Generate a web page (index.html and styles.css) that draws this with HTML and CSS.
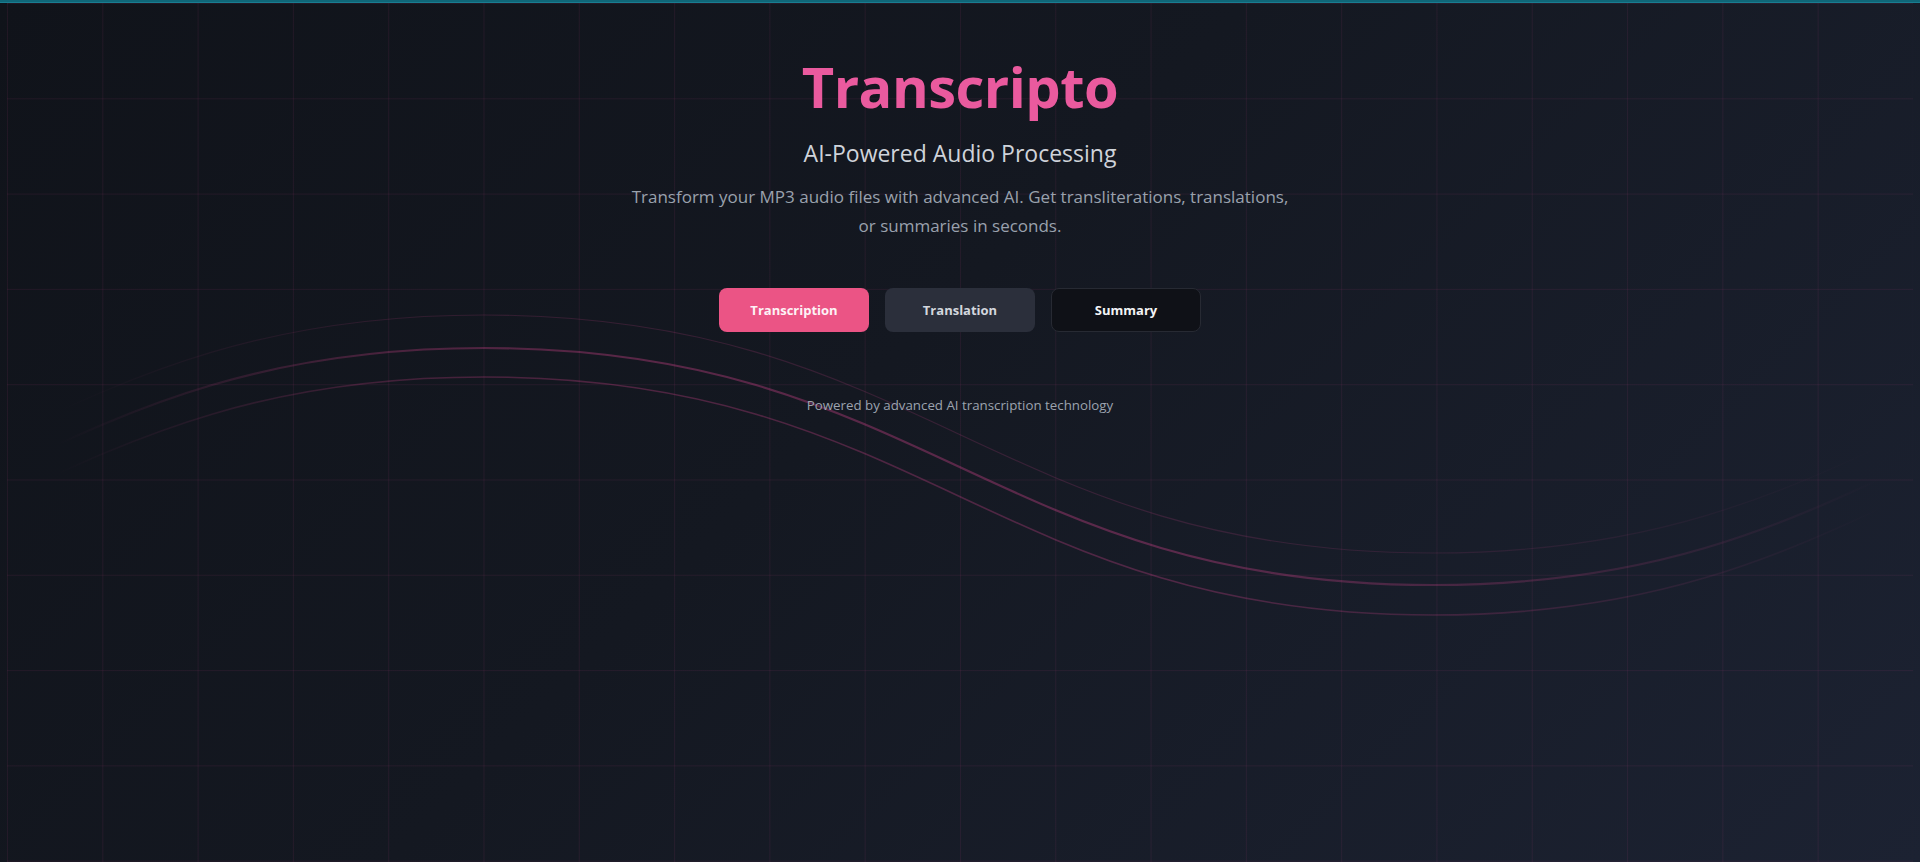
FILE: index.html
```html
<!DOCTYPE html>
<html lang="en">
<head>
<meta charset="utf-8">
<title>Transcripto</title>
<link rel="stylesheet" href="styles.css">
</head>
<body>
<div class="top-bar"></div>
<div class="grid-layer"></div>
<svg class="waves" width="1920" height="862" viewBox="0 0 1920 862" aria-hidden="true">
  <defs>
    <linearGradient id="fade" gradientUnits="userSpaceOnUse" x1="0" y1="0" x2="1920" y2="0">
      <stop offset="0.03" stop-color="#ec4899" stop-opacity="0"/>
      <stop offset="0.2" stop-color="#ec4899" stop-opacity="0.8"/>
      <stop offset="0.32" stop-color="#ec4899" stop-opacity="1"/>
      <stop offset="0.62" stop-color="#ec4899" stop-opacity="1"/>
      <stop offset="0.8" stop-color="#ec4899" stop-opacity="0.6"/>
      <stop offset="0.98" stop-color="#ec4899" stop-opacity="0"/>
    </linearGradient>
  </defs>
  <path class="wave wave-top" d="M-465,553 C-25,553 44,315 484,315 C924,315 993,553 1433,553 C1873,553 1942,315 2382,315"/>
  <path class="wave wave-mid" d="M-465,585 C-25,585 44,348 484,348 C924,348 993,585 1433,585 C1873,585 1942,348 2382,348"/>
  <path class="wave wave-bot" d="M-465,615 C-25,615 44,377 484,377 C924,377 993,615 1433,615 C1873,615 1942,377 2382,377"/>
</svg>
<main class="hero">
  <h1 class="title">Transcripto</h1>
  <h2 class="subtitle">AI-Powered Audio Processing</h2>
  <p class="lead">Transform your MP3 audio files with advanced AI. Get transliterations, translations, or summaries in seconds.</p>
  <div class="modes">
    <button class="mode mode-active">Transcription</button>
    <button class="mode mode-muted">Translation</button>
    <button class="mode mode-dark">Summary</button>
  </div>
  <p class="footnote">Powered by advanced AI transcription technology</p>
</main>
</body>
</html>
```
FILE: styles.css
```css
* { box-sizing: border-box; }
html, body { height: 100%; }
body {
  margin: 0;
  min-height: 862px;
  overflow: hidden;
  font-family: "Open Sans", "Noto Sans", sans-serif;
  background: linear-gradient(135deg, #10131a 0%, #141821 45%, #1c2232 100%);
  color: #e5e7eb;
  position: relative;
}
.top-bar {
  height: 3px;
  background: #0f6678;
  border-bottom: 1px solid #1a7d90;
  position: relative;
  z-index: 2;
}
.grid-layer {
  position: absolute;
  left: 7px;
  right: 7px;
  top: 3px;
  bottom: 0;
  background-image:
    linear-gradient(to right, rgba(236, 72, 153, 0.08) 1px, transparent 1px),
    linear-gradient(to bottom, rgba(236, 72, 153, 0.08) 1px, transparent 1px);
  background-size: 95.3px 95.3px;
  pointer-events: none;
}
.waves {
  position: absolute;
  left: 0;
  top: 0;
  pointer-events: none;
}
.wave { fill: none; stroke: url(#fade); }
.wave-top { stroke-width: 1.2; opacity: 0.16; }
.wave-mid { stroke-width: 2.2; opacity: 0.32; }
.wave-bot { stroke-width: 1.6; opacity: 0.27; }

.hero {
  position: relative;
  z-index: 1;
  display: flex;
  flex-direction: column;
  align-items: center;
  text-align: center;
  padding-top: 53px;
}
.title {
  margin: 0;
  font-size: 56px;
  line-height: 60px;
  font-weight: 700;
  color: #ea5a9e;
  letter-spacing: -0.5px;
}
.subtitle {
  margin: 21px 0 0;
  font-size: 23px;
  line-height: 32px;
  font-weight: 400;
  color: #cfd3da;
}
.lead {
  margin: 14px 0 0;
  max-width: 672px;
  font-size: 17px;
  line-height: 28.5px;
  color: #9aa1ad;
}
.modes {
  display: flex;
  gap: 16px;
  margin-top: 48px;
}
.mode {
  width: 150px;
  height: 44px;
  border-radius: 8px;
  border: 1px solid transparent;
  font-family: inherit;
  font-size: 13px;
  font-weight: 700;
  cursor: pointer;
}
.mode-active { background: #eb5485; color: #fdf2f6; }
.mode-muted { background: #2b2f3b; color: #d3d7de; }
.mode-dark { background: #0f1117; color: #f3f4f6; border-color: #272a33; }
.footnote {
  margin: 63px 0 0;
  font-size: 13.3px;
  line-height: 20px;
  color: #9ca3af;
}
```
